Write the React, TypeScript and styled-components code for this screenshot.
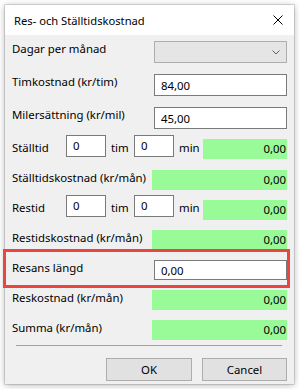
import React from "react";
import styled, { createGlobalStyle } from "styled-components";

const GlobalStyle = createGlobalStyle`
  body {
    margin: 0;
    background: #ffffff;
    font-family: "Segoe UI", "Noto Sans", "Liberation Sans", sans-serif;
    font-size: 11.4px;
    color: #000;
  }
  * { box-sizing: border-box; }
`;

const Page = styled.div`
  padding: 5px;
`;

const Dialog = styled.div`
  width: 289px;
  height: 379px;
  background: #f0f0f0;
  box-shadow: 0 0 0 1px rgba(0, 0, 0, 0.12), 0 1px 7px rgba(0, 0, 0, 0.3);
  display: flex;
  flex-direction: column;
`;

const TitleBar = styled.div`
  height: 30px;
  background: #fff;
  display: flex;
  align-items: center;
  justify-content: space-between;
  padding: 0 11px 0 9px;
  font-size: 11.2px;
`;

const Body = styled.div`
  padding: 6px 7px 0 7px;
  display: flex;
  flex-direction: column;
`;

const Row = styled.div<{ $h: number }>`
  position: relative;
  height: ${(p) => p.$h}px;
  display: flex;
  align-items: flex-start;
`;

const Label = styled.div<{ $top?: number; $w?: number }>`
  flex: ${(p) => (p.$w ? "none" : "1")};
  width: ${(p) => (p.$w ? `${p.$w}px` : "auto")};
  padding-top: ${(p) => p.$top ?? 0}px;
  line-height: 15px;
  white-space: nowrap;
`;

const Unit = styled.div<{ $w: number }>`
  width: ${(p) => p.$w}px;
  padding: 5px 0 0 5px;
  line-height: 15px;
`;

const TextBox = styled.div<{ $w?: number; $h?: number; $small?: boolean }>`
  width: ${(p) => p.$w ?? 133}px;
  height: ${(p) => p.$h ?? 22}px;
  background: #fff;
  border: 1px solid #7a7a7a;
  padding: ${(p) => (p.$small ? "2px 6px" : "0 6px")};
  display: flex;
  align-items: ${(p) => (p.$small ? "flex-start" : "center")};
  line-height: 15px;
`;

const Combo = styled.div`
  width: 133px;
  height: 22px;
  background: #e5e5e5;
  border: 1px solid #adadad;
  display: flex;
  align-items: center;
  justify-content: flex-end;
  padding-right: 6px;
`;

const Result = styled.div<{ $w: number; $top?: number }>`
  width: ${(p) => p.$w}px;
  height: 20px;
  margin-top: ${(p) => p.$top ?? 0}px;
  background: #98fb98;
  display: flex;
  align-items: center;
  justify-content: flex-end;
  padding: 0 1px 2px 0;
  line-height: 15px;
`;

const Highlight = styled.div`
  position: absolute;
  left: -9px;
  right: -3px;
  top: -11px;
  bottom: 2px;
  border: 3px solid #e8463f;
  pointer-events: none;
`;

const Separator = styled.div`
  margin: 0 5px 0 4px;
  border-top: 1px solid #a0a0a0;
`;

const ButtonBar = styled.div`
  margin-top: 12px;
  display: flex;
  justify-content: flex-end;
  gap: 10px;
`;

const Button = styled.div<{ $w: number }>`
  width: ${(p) => p.$w}px;
  height: 23px;
  background: #e1e1e1;
  border: 1px solid #adadad;
  display: flex;
  align-items: center;
  justify-content: center;
`;

const CloseIcon = () => (
  <svg width="10" height="10" viewBox="0 0 10 10">
    <path d="M0.5 0.5 L9.5 9.5 M9.5 0.5 L0.5 9.5" stroke="#000" strokeWidth="1" />
  </svg>
);

const Chevron = () => (
  <svg width="8" height="5" viewBox="0 0 8 5">
    <path d="M0.5 0.5 L4 4 L7.5 0.5" stroke="#606060" strokeWidth="1" fill="none" />
  </svg>
);

const TimeRow: React.FC<{ label: string; greenTop: number }> = ({ label, greenTop }) => (
  <Row $h={35}>
    <Label $w={54} $top={5}>{label}</Label>
    <TextBox $w={40} $small>0</TextBox>
    <Unit $w={28}>tim</Unit>
    <TextBox $w={40} $small>0</TextBox>
    <Unit $w={29}>min</Unit>
    <Result $w={84} $top={greenTop}>0,00</Result>
  </Row>
);

const App: React.FC = () => {
  return (
    <>
      <GlobalStyle />
      <Page>
        <Dialog>
          <TitleBar>
            <span>Res- och Ställtidskostnad</span>
            <CloseIcon />
          </TitleBar>
          <Body>
            <Row $h={33}>
              <Label>Dagar per månad</Label>
              <Combo>
                <Chevron />
              </Combo>
            </Row>
            <Row $h={33}>
              <Label>Timkostnad (kr/tim)</Label>
              <TextBox>84,00</TextBox>
            </Row>
            <Row $h={28}>
              <Label>Milersättning (kr/mil)</Label>
              <TextBox>45,00</TextBox>
            </Row>
            <TimeRow label="Ställtid" greenTop={4} />
            <Row $h={25}>
              <Label>Ställtidskostnad (kr/mån)</Label>
              <Result $w={135}>0,00</Result>
            </Row>
            <TimeRow label="Restid" greenTop={5} />
            <Row $h={30}>
              <Label>Restidskostnad (kr/mån)</Label>
              <Result $w={135}>0,00</Result>
            </Row>
            <Row $h={30}>
              <Label>Resans längd</Label>
              <TextBox $h={20}>0,00</TextBox>
              <Highlight />
            </Row>
            <Row $h={30}>
              <Label>Reskostnad (kr/mån)</Label>
              <Result $w={135}>0,00</Result>
            </Row>
            <Row $h={25}>
              <Label>Summa (kr/mån)</Label>
              <Result $w={135}>0,00</Result>
            </Row>
            <Separator />
            <ButtonBar>
              <Button $w={86}>OK</Button>
              <Button $w={85}>Cancel</Button>
            </ButtonBar>
          </Body>
        </Dialog>
      </Page>
    </>
  );
};

export default App;
